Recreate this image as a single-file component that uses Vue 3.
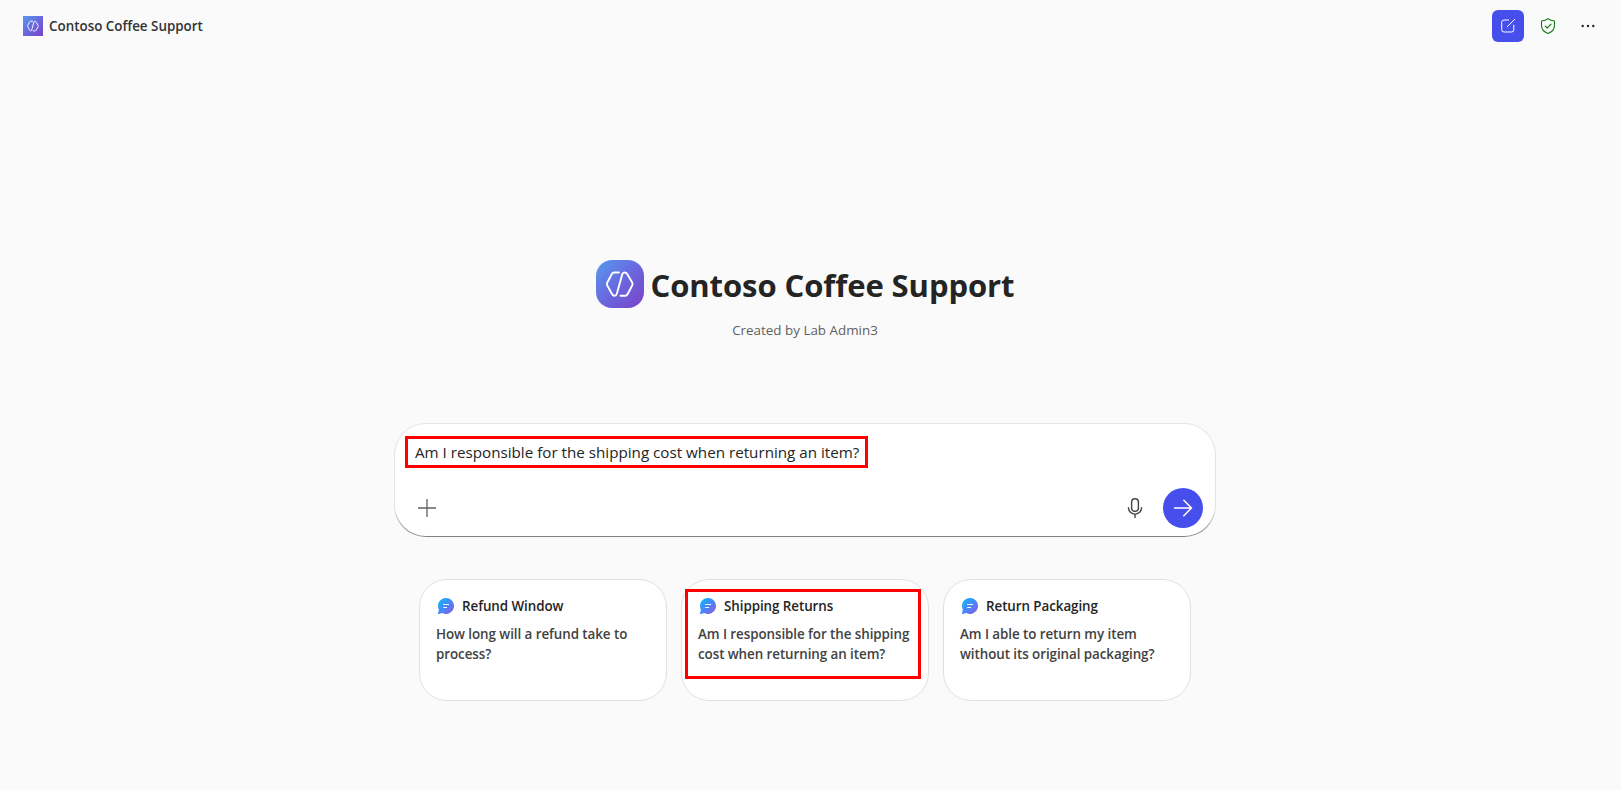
<template>
  <div class="chat-page">
    <header class="top-bar">
      <div class="brand">
        <span class="brand-logo">
          <svg viewBox="0 0 48 48" width="20" height="20">
            <path :d="logoPath" fill="none" stroke="currentColor" stroke-width="2.2" stroke-linecap="round" stroke-linejoin="round" />
          </svg>
        </span>
        <span class="brand-name">{{ agentName }}</span>
      </div>
      <div class="actions">
        <button class="action-btn primary" aria-label="New chat">
          <svg viewBox="0 0 16 16" width="16" height="16">
            <path d="M8.6 2H4a2.3 2.3 0 0 0-2.3 2.3v7.4A2.3 2.3 0 0 0 4 14h7.5a2.3 2.3 0 0 0 2.3-2.3V7.2M7.2 8.8L14.8 1.2" fill="none" stroke="currentColor" stroke-linecap="round" />
          </svg>
        </button>
        <button class="action-btn shield" aria-label="Protected">
          <svg viewBox="0 0 16 16" width="16" height="16">
            <path d="M8 .6c1.8 1.5 3.9 2.2 6.5 2.4v4.6c0 3.8-2.2 6.4-6.5 7.9-4.3-1.5-6.5-4.1-6.5-7.9V3C4.1 2.8 6.2 2.1 8 .6zM5.2 8.1l2 1.9 3.8-3.8" fill="none" stroke="currentColor" stroke-width="1.1" stroke-linecap="round" stroke-linejoin="round" />
          </svg>
        </button>
        <button class="action-btn" aria-label="More">
          <svg viewBox="0 0 16 16" width="16" height="16">
            <circle cx="2.7" cy="8" r="1.2" fill="currentColor" />
            <circle cx="8" cy="8" r="1.2" fill="currentColor" />
            <circle cx="13.3" cy="8" r="1.2" fill="currentColor" />
          </svg>
        </button>
      </div>
    </header>

    <main class="content">
      <div class="hero">
        <span class="hero-logo">
          <svg viewBox="0 0 48 48" width="48" height="48">
            <path :d="logoPath" fill="none" stroke="currentColor" stroke-width="1.9" stroke-linecap="round" stroke-linejoin="round" />
          </svg>
        </span>
        <h1 class="hero-title">{{ agentName }}</h1>
      </div>
      <p class="created-by">Created by Lab Admin3</p>

      <div class="composer">
        <div class="composer-text">
          <span>{{ message }}</span>
          <div class="mark mark-input"></div>
        </div>
        <div class="composer-tools">
          <button class="tool-btn add" aria-label="Add">
            <svg viewBox="0 0 20 20" width="20" height="20">
              <path d="M10 1v18M1 10h18" fill="none" stroke="currentColor" stroke-width="1.3" />
            </svg>
          </button>
          <button class="tool-btn mic" aria-label="Dictate">
            <svg viewBox="0 0 20 20" width="20" height="20">
              <rect x="6.6" y=".7" width="6.8" height="12.6" rx="3.4" fill="none" stroke="currentColor" stroke-width="1.4" />
              <path d="M3.5 9.8a6.5 6.3 0 0 0 13 0M10 16.1v3.3" fill="none" stroke="currentColor" stroke-width="1.4" stroke-linecap="round" />
            </svg>
          </button>
          <button class="send-btn" aria-label="Send">
            <svg viewBox="0 0 20 20" width="20" height="20">
              <path d="M1.5 10h17M10.8 2.3l7.7 7.7-7.7 7.7" fill="none" stroke="currentColor" stroke-width="1.5" stroke-linecap="round" stroke-linejoin="round" />
            </svg>
          </button>
        </div>
      </div>

      <div class="prompts">
        <div v-for="prompt in prompts" :key="prompt.title" class="prompt-card">
          <div class="prompt-head">
            <svg class="prompt-icon" viewBox="0 0 16 16" width="16" height="16">
              <defs>
                <linearGradient id="bubble" x1="0" y1="0" x2="1" y2="1">
                  <stop offset=".1" stop-color="#12b2fb" />
                  <stop offset=".5" stop-color="#4688f7" />
                  <stop offset="1" stop-color="#9354e4" />
                </linearGradient>
              </defs>
              <path d="M8 0a8 8 0 1 1-3.7 15.1L.7 16a.6.6 0 0 1-.7-.7l.9-3.6A8 8 0 0 1 8 0z" fill="url(#bubble)" />
              <path d="M5.6 6.5h5M5.6 9.5h3" fill="none" stroke="#fff" stroke-linecap="round" />
            </svg>
            <span class="prompt-title">{{ prompt.title }}</span>
          </div>
          <p class="prompt-text">{{ prompt.lines[0] }}<br />{{ prompt.lines[1] }}</p>
          <div v-if="prompt.marked" class="mark mark-card"></div>
        </div>
      </div>
    </main>
  </div>
</template>

<script setup>
const agentName = 'Contoso Coffee Support'
const message = 'Am I responsible for the shipping cost when returning an item?'

// shared by the small and the large logo
const logoPath = 'M23 12.5H18.2Q16.8 12.5 16 13.8L11.3 22.5Q10.6 24 11.3 25.5L16 34Q16.9 35.7 18.5 35.7Q20.2 35.7 20.8 33.8L26.2 14.4Q26.8 12.5 28.6 12.5Q30.3 12.5 31.2 14L36.2 22.5Q37 24 36.2 25.5L31.5 34.2Q30.7 35.7 29.2 35.7H24.5'

const prompts = [
  {
    title: 'Refund Window',
    lines: ['How long will a refund take to', 'process?']
  },
  {
    title: 'Shipping Returns',
    lines: ['Am I responsible for the shipping', 'cost when returning an item?'],
    marked: true
  },
  {
    title: 'Return Packaging',
    lines: ['Am I able to return my item', 'without its original packaging?']
  }
]
</script>

<style>
body {
  margin: 0;
  background: #fafafa;
}
</style>

<style scoped>
.chat-page {
  height: 790px;
  overflow: hidden;
  box-sizing: border-box;
  padding-right: 11px;
  background: #fafafa;
  color: #242424;
  font-family: "Segoe UI", "Open Sans", "Noto Sans", sans-serif;
}

button {
  border: none;
  padding: 0;
  background: none;
  color: inherit;
  display: flex;
  align-items: center;
  justify-content: center;
}

svg {
  display: block;
  flex-shrink: 0;
}

.top-bar {
  height: 52px;
  padding-left: 23px;
  padding-right: 6px;
  display: flex;
  align-items: center;
  justify-content: space-between;
}

.brand {
  display: flex;
  align-items: center;
  gap: 6px;
}

.brand-logo,
.hero-logo {
  background: linear-gradient(135deg, #559bee 0%, #6a66de 52%, #7a43c8 100%);
  color: #fff;
}

.brand-name {
  font-size: 13.4px;
  line-height: 20px;
  font-weight: 600;
  color: #333;
}

.actions {
  display: flex;
  gap: 8px;
}

.action-btn {
  width: 32px;
  height: 32px;
  border-radius: 6px;
}

.action-btn.primary {
  background: #464feb;
  color: #fff;
}

.action-btn.shield {
  color: #107c10;
}

.content {
  display: flex;
  flex-direction: column;
  align-items: center;
  padding-top: 208px;
}

.hero {
  display: flex;
  align-items: center;
  gap: 7px;
  height: 48px;
}

.hero-logo {
  border-radius: 16px;
}

.hero-title {
  margin: 0;
  padding-top: 1px;
  font-size: 31px;
  line-height: 44px;
  font-weight: 700;
  letter-spacing: -0.08px;
  white-space: nowrap;
}

.created-by {
  margin: 12px 0 0;
  font-size: 13.4px;
  line-height: 20px;
  color: #616161;
}

.composer {
  margin-top: 83px;
  width: 822px;
  height: 114px;
  box-sizing: border-box;
  border: 1px solid transparent;
  border-radius: 32px;
  background:
    linear-gradient(#fff, #fff) padding-box,
    linear-gradient(#e5e5e5 76%, #808080 100%) border-box;
  padding: 16px 12px 8px 20px;
  display: flex;
  flex-direction: column;
  justify-content: space-between;
}

.composer-text {
  position: relative;
  font-size: 15.2px;
  line-height: 24px;
  white-space: nowrap;
}

.composer-tools {
  display: flex;
  align-items: center;
}

.tool-btn {
  width: 24px;
  height: 24px;
}

.add {
  color: #616161;
  margin-right: auto;
}

.mic {
  color: #424242;
  margin-right: 16px;
}

.send-btn {
  width: 40px;
  height: 40px;
  border-radius: 50%;
  background: #464feb;
  color: #fff;
}

.prompts {
  display: flex;
  gap: 14px;
  margin-top: 42px;
}

.prompt-card {
  position: relative;
  width: 248px;
  height: 122px;
  box-sizing: border-box;
  border: 1px solid #e0e0e0;
  border-radius: 28px;
  background: #fff;
  padding: 16px;
  font-size: 13.4px;
  line-height: 20px;
  font-weight: 600;
  letter-spacing: -0.07px;
  white-space: nowrap;
}

.prompt-head {
  display: flex;
  align-items: center;
  gap: 8px;
  padding-left: 2px;
}

.prompt-text {
  margin: 8px 0 0;
  color: #424242;
}

/* highlight frames over the content */
.mark {
  position: absolute;
  box-sizing: border-box;
  border: 3px solid #fe0000;
}

.mark-input {
  left: -10px;
  top: -4px;
  width: 463px;
  height: 32px;
}

.mark-card {
  left: 3px;
  top: 9px;
  width: 236px;
  height: 90px;
}
</style>
